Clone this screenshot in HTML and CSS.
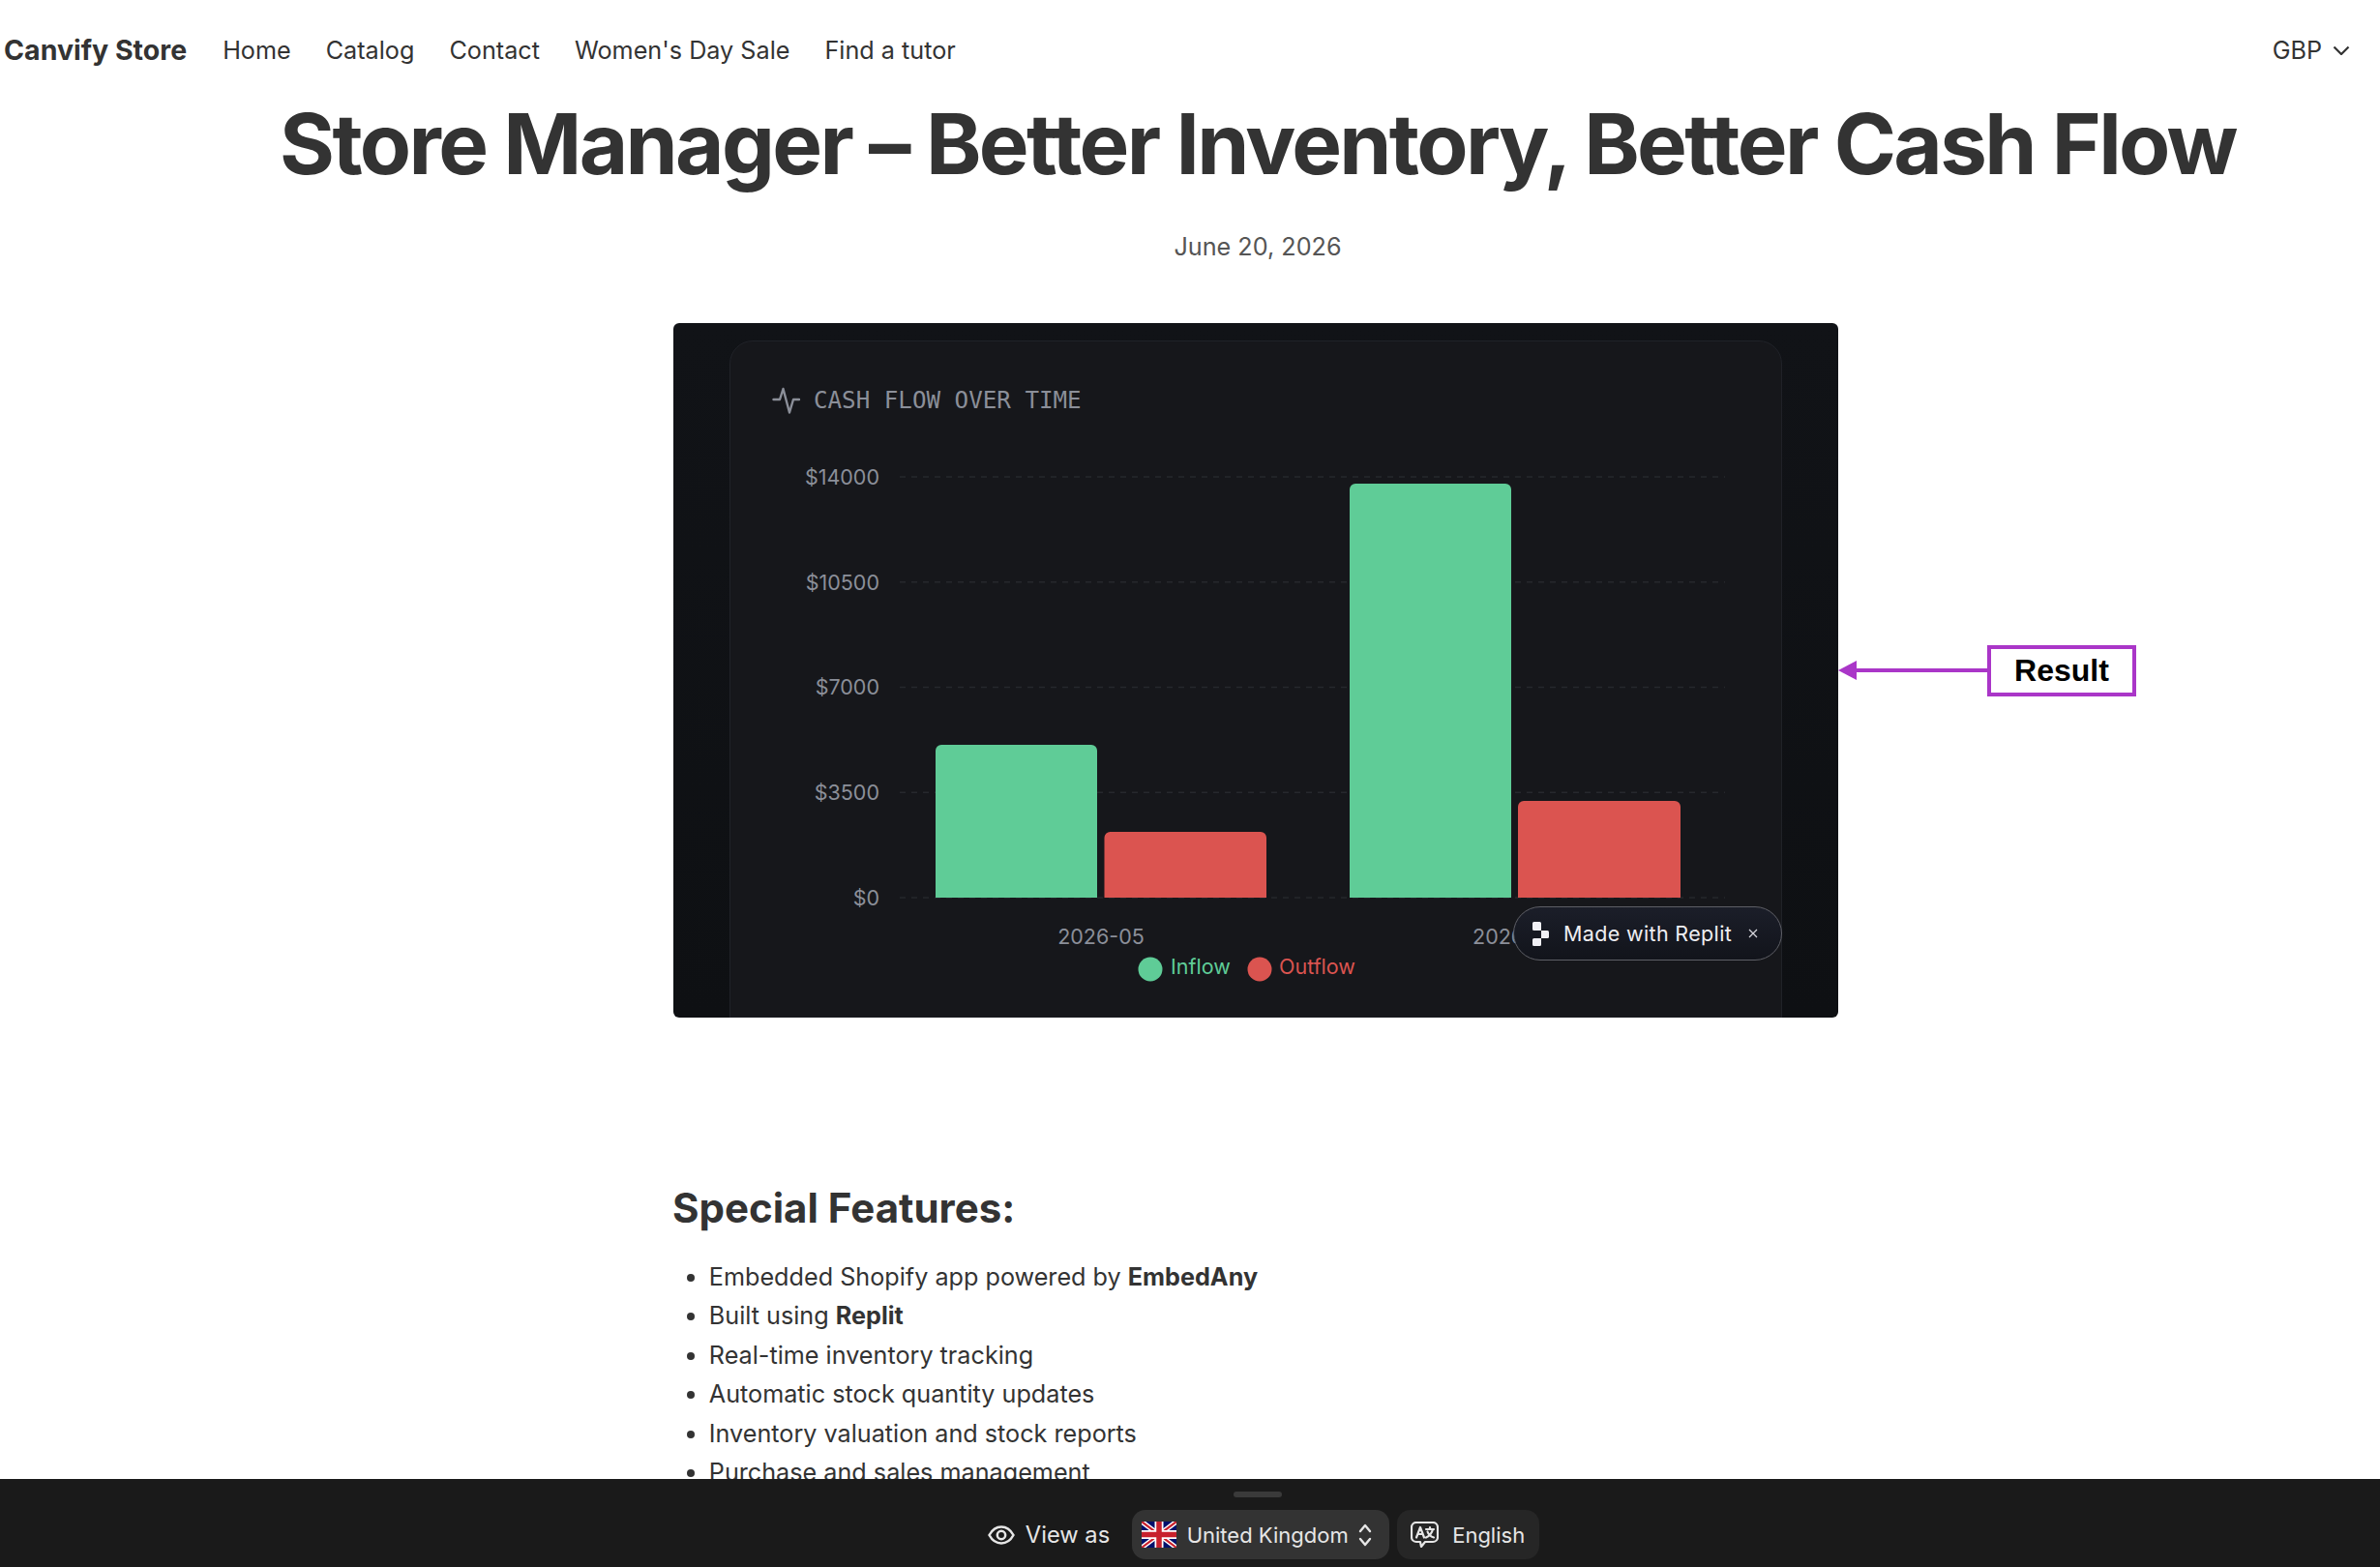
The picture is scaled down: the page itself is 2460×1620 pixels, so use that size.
FILE: index.html
```html
<!DOCTYPE html>
<html lang="en">
<head>
    <meta charset="UTF-8">
    <title>Store Manager – Better Inventory, Better Cash Flow</title>
    <link rel="stylesheet" href="styles.css">
</head>
<body>
    <!-- Store nav -->
    <header class="site-nav">
        <a class="brand">Canvify Store</a>
        <nav class="nav-links">
            <a>Home</a>
            <a>Catalog</a>
            <a>Contact</a>
            <a>Women's Day Sale</a>
            <a>Find a tutor</a>
        </nav>
        <div class="currency">
            GBP
            <svg class="currency-chevron" viewBox="0 0 18 10" fill="none" stroke="#333" stroke-width="2.2"><path d="M1.5 1.5L9 9l7.5-7.5"/></svg>
        </div>
    </header>

    <!-- Article head -->
    <div class="article-head">
        <h1>Store Manager – Better Inventory, Better Cash Flow</h1>
        <p class="article-date">June 20, 2026</p>
    </div>

    <main class="article-body">
        <figure class="chart-figure">
            <svg class="chart" viewBox="0 0 1204 718" width="1204" height="718">
                <defs>
                    <linearGradient id="outer-bg" x1="0" y1="0" x2="0" y2="1">
                        <stop offset="0" stop-color="#111317"/>
                        <stop offset="1" stop-color="#0e1013"/>
                    </linearGradient>
                </defs>
                <rect width="1204" height="718" rx="6" fill="url(#outer-bg)"/>
                <path d="M58.5 718V42a23.5 23.5 0 0 1 23.5-23.5H1122a23.5 23.5 0 0 1 23.5 23.5V718z" fill="#16171b" stroke="#202228"/>

                <path d="M103.5 79h6.5l3.5-11 6.5 24.5 4-13.5h6" fill="none" stroke="#8b8f99" stroke-width="2.4" stroke-linecap="round" stroke-linejoin="round"/>
                <text class="chart-title" x="145" y="88">CASH FLOW OVER TIME</text>

                <g class="grid-lines">
                    <path d="M234 159H1087"/>
                    <path d="M234 267.75H1087"/>
                    <path d="M234 376.5H1087"/>
                    <path d="M234 485.25H1087"/>
                    <path d="M234 594H1087"/>
                </g>
                <g class="axis-label y-labels">
                    <text x="213" y="159">$14000</text>
                    <text x="213" y="267.75">$10500</text>
                    <text x="213" y="376">$7000</text>
                    <text x="213" y="485.25">$3500</text>
                    <text x="213" y="594">$0</text>
                </g>

                <path class="bar-in" d="M271 594V442a6 6 0 0 1 6-6h155a6 6 0 0 1 6 6V594z"/>
                <path class="bar-out" d="M445.5 594V532a6 6 0 0 1 6-6h155.5a6 6 0 0 1 6 6V594z"/>
                <path class="bar-in" d="M699 594V172a6 6 0 0 1 6-6h155a6 6 0 0 1 6 6V594z"/>
                <path class="bar-out" d="M873 594V500a6 6 0 0 1 6-6h156a6 6 0 0 1 6 6V594z"/>

                <g class="axis-label x-labels">
                    <text x="442" y="634">2026-05</text>
                    <text x="871" y="634">2026-06</text>
                </g>

                <circle cx="493" cy="668" r="12.5" fill="#5fcc97"/>
                <text class="legend-in" x="514" y="665">Inflow</text>
                <circle cx="606" cy="668" r="12.5" fill="#db5450"/>
                <text class="legend-out" x="626" y="665">Outflow</text>
            </svg>

            <!-- Badge that sits over the chart -->
            <div class="replit-badge">
                <svg class="replit-logo" viewBox="0 0 17 25" fill="#f0f0f5">
                    <path d="M0 1.5A1.5 1.5 0 0 1 1.5 0H7.5A1.5 1.5 0 0 1 9 1.5V9H1.5A1.5 1.5 0 0 1 0 7.5z"/>
                    <path d="M9 9H15.5A1.5 1.5 0 0 1 17 10.5V15.5A1.5 1.5 0 0 1 15.5 17H9z"/>
                    <path d="M1.5 17H9V23.5A1.5 1.5 0 0 1 7.5 25H1.5A1.5 1.5 0 0 1 0 23.5V18.5A1.5 1.5 0 0 1 1.5 17z"/>
                </svg>
                <span class="badge-text">Made with Replit</span>
                <svg class="badge-close" viewBox="0 0 10 10" fill="none" stroke="#d8d8de" stroke-width="1.2"><path d="M1 1l8 8M9 1l-8 8"/></svg>
            </div>

            <!-- Annotation next to the chart -->
            <div class="result-note">
                <svg class="result-arrow" viewBox="0 0 155 22" width="155" height="22">
                    <path d="M20 11H155" stroke="#aa36c8" stroke-width="4"/>
                    <path d="M1 11L20 1V21z" fill="#aa36c8"/>
                </svg>
                <div class="result-box">Result</div>
            </div>
        </figure>

        <h2>Special Features:</h2>
        <ul class="feature-list">
            <li>Embedded Shopify app powered by <strong>EmbedAny</strong></li>
            <li>Built using <strong>Replit</strong></li>
            <li>Real-time inventory tracking</li>
            <li>Automatic stock quantity updates</li>
            <li>Inventory valuation and stock reports</li>
            <li>Purchase and sales management</li>
        </ul>
    </main>

    <!-- Preview bar -->
    <footer class="preview-bar">
        <div class="bar-handle"></div>
        <div class="bar-row">
            <div class="view-as">
                <svg class="eye-icon" viewBox="0 0 28 20" fill="none" stroke="#e6e6e6" stroke-width="2.5">
                    <path d="M1.5 10C4.5 4.5 9 1.5 14 1.5s9.5 3 12.5 8.5c-3 5.5-7.5 8.5-12.5 8.5S4.5 15.5 1.5 10z"/>
                    <circle cx="14" cy="10" r="4.2"/>
                </svg>
                <span>View as</span>
            </div>
            <div class="bar-select country-select">
                <svg class="flag" viewBox="0 0 36 27">
                    <rect width="36" height="27" rx="2" fill="#00106b"/>
                    <path d="M0 0L36 27M36 0L0 27" stroke="#fff" stroke-width="5"/>
                    <path d="M0 0L36 27M36 0L0 27" stroke="#c8202c" stroke-width="2.2"/>
                    <path d="M18 0V27M0 13.5H36" stroke="#fff" stroke-width="9"/>
                    <path d="M18 0V27M0 13.5H36" stroke="#c8202c" stroke-width="5.5"/>
                </svg>
                <span>United Kingdom</span>
                <svg class="updown" viewBox="0 0 14 24" fill="none" stroke="#e6e6e6" stroke-width="2.4" stroke-linecap="round" stroke-linejoin="round">
                    <path d="M2 8l5-6 5 6M2 16l5 6 5-6"/>
                </svg>
            </div>
            <div class="bar-select language-select">
                <svg class="translate-icon" viewBox="0 0 29 27" fill="none" stroke="#e6e6e6" stroke-width="2.2" stroke-linejoin="round" stroke-linecap="round">
                    <path d="M6 1h17a5 5 0 0 1 5 5v10a5 5 0 0 1-5 5H15l-4 5-1-5H6a5 5 0 0 1-5-5V6a5 5 0 0 1 5-5z"/>
                    <path d="M6 16.5L10 6l4 10.5M7.5 13h5"/>
                    <path d="M16 8h8M20 6v2M23 8c-1 4-3.5 7-7 8.5M17.5 10.5c1 3 3 5 6.5 6"/>
                </svg>
                <span>English</span>
            </div>
        </div>
    </footer>
</body>
</html>
```

FILE: styles.css
```css
/* Page */
body {
    margin: 0;
    height: 1620px;
    overflow: hidden;
    background-color: #ffffff;
    color: #333333;
    font-family: Inter, "Noto Sans", sans-serif;
    font-size: 25.2px;
    line-height: 40px;
}

/* Store nav */
.site-nav {
    display: flex;
    align-items: center;
    height: 40px;
    padding: 32px 31px 24px 4px;
}

.brand {
    font-size: 28.5px;
    font-weight: 700;
    margin-right: 37px;
}

.nav-links {
    display: flex;
    gap: 36px;
}

.currency {
    display: flex;
    align-items: center;
    gap: 11px;
    margin-left: auto;
}

.currency-chevron {
    width: 18px;
    height: 10px;
}

/* Article head */
.article-head {
    margin-left: 140px;
    width: 2320px;
    text-align: center;
}

h1 {
    margin: 0 0 35px;
    padding-top: 1px;
    height: 103px;
    font-size: 87px;
    line-height: 104px;
    font-weight: 700;
    letter-spacing: -2.65px;
}

.article-date {
    margin: 0 0 59px;
    color: #555555;
}

/* Article body */
.article-body {
    margin-left: 695px;
    width: 1205px;
}

.chart-figure {
    position: relative;
    margin: 0 0 172px 1px;
    width: 1204px;
    height: 718px;
}

.chart {
    display: block;
}

.chart-title {
    font-family: "DejaVu Sans Mono", monospace;
    font-size: 24.2px;
    fill: #8b8f99;
}

.grid-lines path {
    stroke: #26282d;
    stroke-width: 1.5;
    stroke-dasharray: 6 6;
}

.axis-label {
    font-size: 21.5px;
    fill: #8b8f99;
    dominant-baseline: central;
}

.y-labels {
    text-anchor: end;
}

.x-labels {
    text-anchor: middle;
}

.bar-in {
    fill: #5fcc97;
}

.bar-out {
    fill: #db5450;
}

.legend-in,
.legend-out {
    font-size: 21.5px;
    dominant-baseline: central;
}

.legend-in {
    fill: #5fcc97;
}

.legend-out {
    fill: #db5450;
}

/* Replit badge */
.replit-badge {
    position: absolute;
    left: 868px;
    top: 603px;
    box-sizing: border-box;
    display: flex;
    align-items: center;
    width: 278px;
    height: 56px;
    padding-left: 19px;
    border: 1.5px solid #5e5f66;
    border-radius: 28px;
    background: linear-gradient(to bottom, #1b1e29, #12141b);
    color: #eeeef2;
}

.replit-logo {
    width: 17px;
    height: 25px;
    margin-right: 15px;
}

.badge-text {
    font-size: 21.5px;
    letter-spacing: 0.35px;
}

.badge-close {
    width: 10px;
    height: 10px;
    margin-left: 17px;
}

/* Result annotation */
.result-note {
    position: absolute;
    left: 1203px;
    top: 333px;
    display: flex;
    align-items: center;
}

.result-arrow {
    display: block;
    margin-bottom: 2px;
}

.result-box {
    box-sizing: border-box;
    width: 154px;
    height: 53px;
    border: 4px solid #aa36c8;
    background-color: #ffffff;
    color: #000000;
    font-family: "Liberation Sans", Arial, sans-serif;
    font-size: 32px;
    font-weight: 700;
    line-height: 45px;
    text-align: center;
}

/* Features */
h2 {
    margin: 0 0 26px;
    font-size: 42px;
    line-height: 50px;
    font-weight: 700;
}

.feature-list {
    margin: 0;
    padding-left: 37.8px;
    line-height: 40.4px;
}

/* Preview bar */
.preview-bar {
    position: fixed;
    left: 0;
    right: 0;
    bottom: 0;
    box-sizing: border-box;
    height: 91px;
    padding-left: 152px;
    display: flex;
    flex-direction: column;
    align-items: center;
    background-color: #1a1a1a;
    color: #e6e6e6;
    font-size: 22px;
}

.bar-handle {
    width: 50px;
    height: 6px;
    margin: 13px 12px 0 0;
    border-radius: 3px;
    background-color: #3a3a3a;
}

.bar-row {
    display: flex;
    align-items: center;
    gap: 8px;
    margin-top: 13px;
}

.view-as {
    display: flex;
    align-items: center;
    gap: 11px;
    margin-right: 15px;
    font-size: 23.7px;
}

.eye-icon {
    width: 28px;
    height: 20px;
}

.bar-select {
    box-sizing: border-box;
    display: flex;
    align-items: center;
    height: 51px;
    border-radius: 14px;
}

.country-select {
    width: 266px;
    padding-left: 10px;
    gap: 10.5px;
    background-color: #333333;
}

.language-select {
    width: 147px;
    padding-left: 14px;
    gap: 14px;
    background-color: #262626;
}

.flag {
    width: 36px;
    height: 27px;
}

.updown {
    width: 14px;
    height: 24px;
}

.translate-icon {
    width: 29px;
    height: 27px;
}
```
